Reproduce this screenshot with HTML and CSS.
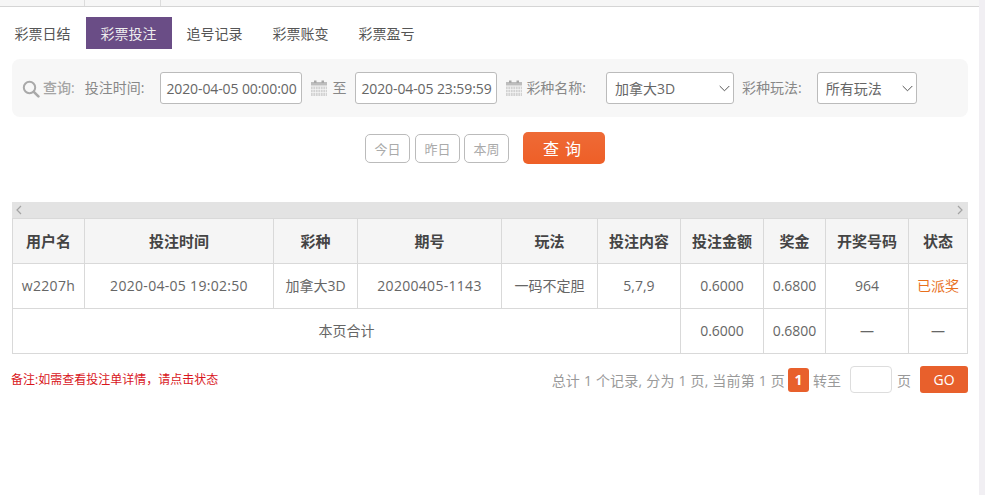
FILE: index.html
```html
<!DOCTYPE html>
<html lang="zh">
<head>
<meta charset="utf-8">
<title>彩票投注</title>
<link rel="stylesheet" href="styles.css">
</head>
<body>
<div class="page">
  <main class="main">
    <div class="topstrip"><span class="strip-a"></span><span class="strip-b"></span></div>
    <nav class="tabs">
      <a class="tab">彩票日结</a>
      <a class="tab active">彩票投注</a>
      <a class="tab">追号记录</a>
      <a class="tab">彩票账变</a>
      <a class="tab">彩票盈亏</a>
    </nav>
    <section class="filter">
      <svg class="search-icon" width="18" height="18" viewBox="0 0 18 18"><circle cx="7.5" cy="7.5" r="5.7" fill="none" stroke="#a9a9a9" stroke-width="2"/><path d="M11.8 11.8 16.4 16.4" stroke="#a9a9a9" stroke-width="2.6" stroke-linecap="round"/></svg>
      <b class="lbl-query">查询:</b>
      <span class="lbl lbl-time">投注时间:</span>
      <input class="dt" value="2020-04-05 00:00:00">
      <svg class="cal" width="16" height="16" viewBox="0 0 16 16"><path d="M0 2h16v3.500H0z" fill="#bdbdbd"/><path d="M3 .5h2.500V3H3zM10.500 .5H13V3h-2.500z" fill="#a8a8a8"/><path d="M0 6.500h16V16H0z" fill="#d2d2d2"/><path d="M2 6.500v9.500M4.500 6.500v9.500M7 6.500v9.500M9.500 6.500v9.500M12 6.500v9.500M14.500 6.500v9.500M0 9.500h16M0 12.500h16" stroke="#f7f7f7" stroke-width=".7"/></svg>
      <span class="lbl lbl-to">至</span>
      <input class="dt" value="2020-04-05 23:59:59">
      <svg class="cal" width="16" height="16" viewBox="0 0 16 16"><path d="M0 2h16v3.500H0z" fill="#bdbdbd"/><path d="M3 .5h2.500V3H3zM10.500 .5H13V3h-2.500z" fill="#a8a8a8"/><path d="M0 6.500h16V16H0z" fill="#d2d2d2"/><path d="M2 6.500v9.500M4.500 6.500v9.500M7 6.500v9.500M9.500 6.500v9.500M12 6.500v9.500M14.500 6.500v9.500M0 9.500h16M0 12.500h16" stroke="#f7f7f7" stroke-width=".7"/></svg>
      <span class="lbl lbl-name">彩种名称:</span>
      <span class="sel-wrap">
        <select class="sel sel-name"><option>加拿大3D</option></select>
        <svg class="chev" width="11" height="7" viewBox="0 0 11 7"><path d="M.7 1 5.500 5.800 10.300 1" fill="none" stroke="#555" stroke-width="1"/></svg>
      </span>
      <span class="lbl lbl-play">彩种玩法:</span>
      <span class="sel-wrap">
        <select class="sel sel-play"><option>所有玩法</option></select>
        <svg class="chev" width="11" height="7" viewBox="0 0 11 7"><path d="M.7 1 5.500 5.800 10.300 1" fill="none" stroke="#555" stroke-width="1"/></svg>
      </span>
    </section>
    <div class="actions">
      <button class="quick">今日</button>
      <button class="quick">昨日</button>
      <button class="quick">本周</button>
      <button class="submit">查 询</button>
    </div>
    <div class="scrollbar">
      <svg width="8" height="10" viewBox="0 0 8 10"><path d="M6 1 2 5l4 4" fill="none" stroke="#a3a3a3" stroke-width="1.200"/></svg>
      <svg width="8" height="10" viewBox="0 0 8 10"><path d="M2 1l4 4-4 4" fill="none" stroke="#a3a3a3" stroke-width="1.200"/></svg>
    </div>
    <table class="grid">
      <colgroup>
        <col class="c1"><col class="c2"><col class="c3"><col class="c4"><col class="c5"><col class="c6"><col class="c7"><col class="c8"><col class="c9"><col class="c10">
      </colgroup>
      <thead>
        <tr><th>用户名</th><th>投注时间</th><th>彩种</th><th>期号</th><th>玩法</th><th>投注内容</th><th>投注金额</th><th>奖金</th><th>开奖号码</th><th>状态</th></tr>
      </thead>
      <tbody>
        <tr><td class="wide">w2207h</td><td class="wide">2020-04-05 19:02:50</td><td>加拿大3D</td><td class="wide">20200405-1143</td><td>一码不定胆</td><td>5,7,9</td><td>0.6000</td><td>0.6800</td><td>964</td><td class="won">已派奖</td></tr>
        <tr><td colspan="6">本页合计</td><td>0.6000</td><td>0.6800</td><td>—</td><td>—</td></tr>
      </tbody>
    </table>
    <div class="foot">
      <span class="note">备注:如需查看投注单详情，请点击状态</span>
      <div class="pager">
        <span class="pg-info">总计 1 个记录, 分为 1 页, 当前第 1 页</span>
        <span class="pg-cur">1</span>
        <span class="pg-to">转至</span>
        <input class="pg-input">
        <span class="pg-unit">页</span>
        <button class="pg-go">GO</button>
      </div>
    </div>
  </main>
  <div class="vbar"></div>
</div>
</body>
</html>
```
FILE: styles.css
```css
* { box-sizing: border-box; }
html, body { margin: 0; padding: 0; height: 100%; overflow: hidden; background: #fff; }
body { font-family: "Open Sans", "Noto Sans CJK SC", sans-serif; font-size: 14px; color: #666; }
button, input, select { font-family: inherit; }

.page { display: flex; width: 985px; height: 495px; }
.main { flex: 1; min-width: 0; }
.vbar { width: 6px; background: #f1eff3; }

.topstrip { height: 7px; background: #f6f6f6; border-bottom: 1px solid #d5d5d5; display: flex; }
.strip-a { flex: none; width: 85px; border-right: 1px solid #dcdcdc; }
.strip-b { flex: none; width: 76px; border-right: 1px solid #dcdcdc; }

.tabs { display: flex; margin-top: 10px; height: 32px; }
.tab { width: 86px; padding-right: 1px; text-align: center; line-height: 34px; color: #555; }
.tab.active { background: #6a4d86; color: #eee; }

.filter { display: flex; align-items: center; height: 58px; margin: 10px 11px 0 12px; padding-left: 10px; background: #f7f7f7; border-radius: 8px; }
.search-icon { flex: none; margin-right: 3px; margin-top: 1px; }
.lbl-query { color: #a5a5a5; font-weight: 500; padding-bottom: 2px; }
.lbl { color: #888; padding-bottom: 2px; }
.lbl-time { margin-left: 10px; margin-right: 16px; }
.lbl-to { margin: 0 9px 0 5px; }
.lbl-name { margin: 0 20px 0 4px; }
.lbl-play { margin: 0 15px 0 8px; }
.dt { flex: none; width: 142px; height: 32px; padding: 0 0 0 5px; border: 1px solid #bbb; border-radius: 3px; background: #fff; font-size: 14px; color: #666; letter-spacing: -.1px; }
.cal { flex: none; margin-left: 9px; }
.sel-wrap { position: relative; display: flex; }
.sel { appearance: none; height: 32px; padding-left: 8px; border: 1px solid #bbb; border-radius: 3px; background: #fff; font-size: 14px; color: #666; }
.sel-name { width: 128px; }
.sel-play { width: 100px; }
.chev { position: absolute; right: 4px; top: 13px; pointer-events: none; }

.actions { display: flex; align-items: center; height: 32px; margin: 15px 0 0 365px; }
.quick { width: 45px; height: 29px; margin-right: 5px; padding: 0; border: 1px solid #bbb; border-radius: 5px; background: #fff; color: #aaa; font-size: 13px; }
.quick:nth-child(3) { margin-left: -1px; }
.submit { width: 82px; height: 32px; margin-left: 9px; padding: 0 3px 0 0; border: 0; border-radius: 5px; background: linear-gradient(#ee6a36, #ee5f27); color: #fff; font-size: 16px; letter-spacing: 1px; }

.scrollbar { display: flex; justify-content: space-between; align-items: center; height: 16px; margin: 38px 11px 0 12px; padding: 0 4px 0 3px; background: #e3e3e3; }

.grid { width: 955px; margin-left: 12px; border-collapse: collapse; table-layout: fixed; }
.grid th, .grid td { height: 45px; padding: 0 0 2px; border: 1px solid #d9d9d9; text-align: center; white-space: nowrap; }
.grid th { background: #f5f5f5; color: #444; font-weight: 700; font-size: 15px; }
.grid td { color: #666; }
.grid td.wide { letter-spacing: .3px; }
.grid td.won { color: #e8701e; }
.c1 { width: 72px; } .c2 { width: 189px; } .c3 { width: 84px; } .c4 { width: 144px; } .c5 { width: 96px; }
.c6 { width: 83px; } .c7 { width: 83px; } .c8 { width: 62px; } .c9 { width: 83px; } .c10 { width: 59px; }

.foot { display: flex; justify-content: space-between; align-items: center; height: 27px; margin: 12px 11px 0 11px; }
.note { color: #d9161c; font-size: 12px; padding-bottom: 1px; }
.pager { display: flex; align-items: center; }
.pg-info { color: #999; margin-right: 3px; letter-spacing: .2px; }
.pg-cur { width: 21px; height: 24px; line-height: 24px; text-align: center; background: #e8602c; border-radius: 3px; color: #fff; font-weight: 700; }
.pg-to { margin: 0 9px 0 4px; color: #999; }
.pg-input { width: 42px; height: 27px; border: 1px solid #ddd; border-radius: 4px; background: #fff; }
.pg-unit { margin: 0 9px 0 5px; color: #999; }
.pg-go { width: 48px; height: 27px; padding: 0; border: 0; border-radius: 3px; background: #e8602c; color: #fff; font-size: 14px; }
```
